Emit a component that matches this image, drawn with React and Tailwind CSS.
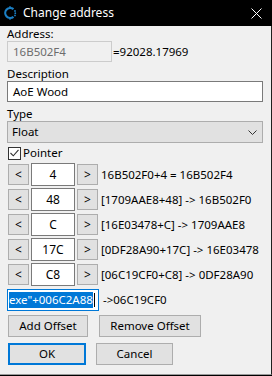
import React from "react";

const font = { fontFamily: '"Noto Sans", "Open Sans", Arial, sans-serif' };

const rows = [
  { off: "4", text: "16B502F0+4 = 16B502F4" },
  { off: "48", text: "[1709AAE8+48] -> 16B502F0" },
  { off: "C", text: "[16E03478+C] -> 1709AAE8" },
  { off: "17C", text: "[0DF28A90+17C] -> 16E03478" },
  { off: "C8", text: "[06C19CF0+C8] -> 0DF28A90" },
];

function AppIcon() {
  return (
    <svg width="14" height="14" viewBox="0 0 14 14" className="shrink-0">
      <path
        d="M10.5 3.2 A5 5 0 1 0 10.5 10.8"
        fill="none"
        stroke="#1b7fc4"
        strokeWidth="2.2"
      />
      <circle cx="12" cy="5" r="0.9" fill="#1b7fc4" />
      <circle cx="12.3" cy="7.2" r="0.9" fill="#1b7fc4" />
      <circle cx="12" cy="9.4" r="0.9" fill="#1b7fc4" />
      <circle cx="7" cy="0.9" r="0.8" fill="#1b7fc4" />
      <circle cx="7" cy="13.1" r="0.8" fill="#1b7fc4" />
    </svg>
  );
}

function SmallBtn({ children }) {
  return (
    <div className="w-[21px] h-[21px] shrink-0 flex items-center justify-center bg-[#e1e1e1] border border-[#adadad] text-[12px] leading-none text-black">
      {children}
    </div>
  );
}

function OffsetRow({ off, text }) {
  return (
    <div className="flex items-center h-[23px] pl-[1px]">
      <SmallBtn>&lt;</SmallBtn>
      <div className="ml-[2px] w-[44px] h-[23px] bg-white border border-[#7a7a7a] flex items-center justify-center text-[12px]">
        {off}
      </div>
      <div className="ml-[2px]">
        <SmallBtn>&gt;</SmallBtn>
      </div>
      <span className="ml-[3px] text-black whitespace-nowrap">{text}</span>
    </div>
  );
}

export default function App() {
  return (
    <div className="w-[272px] h-[376px] bg-black flex flex-col select-none" style={font}>
      {/* Title bar */}
      <div className="h-[26px] flex items-center shrink-0">
        <div className="ml-[3px]">
          <AppIcon />
        </div>
        <span className="ml-[6px] text-white text-[12px]">Change address</span>
        <svg width="11" height="11" viewBox="0 0 11 11" className="ml-auto mr-[10px]">
          <path d="M0.5 0.5 L10.5 10.5 M10.5 0.5 L0.5 10.5" stroke="#fff" strokeWidth="1" />
        </svg>
      </div>

      {/* Body */}
      <div className="flex-1 bg-[#f0f0f0] border-r border-[#1f1f1f] border-b border-b-[#9a9a9a] mb-[1px] px-[7px] text-[11.5px] text-black">
        <div className="h-[15px] leading-[15px]">Address:</div>
        <div className="flex items-center h-[21px]">
          <div className="w-[105px] h-[21px] bg-[#f0f0f0] border border-[#cccccc] flex items-center pl-[5px] text-[#6d6d6d]">
            16B502F4
          </div>
          <span className="ml-[1px]">=92028.17969</span>
        </div>

        <div className="mt-[4px] h-[15px] leading-[15px]">Description</div>
        <div className="w-[256px] h-[21px] bg-white border border-[#7a7a7a] flex items-center pl-[5px]">
          AoE Wood
        </div>

        <div className="mt-[4px] h-[15px] leading-[15px]">Type</div>
        <div className="w-[256px] h-[22px] bg-[#e1e1e1] border border-[#adadad] flex items-center pl-[4px] pr-[5px]">
          <span>Float</span>
          <svg width="9" height="5" viewBox="0 0 9 5" className="ml-auto">
            <path d="M0.5 0.5 L4.5 4.5 L8.5 0.5" fill="none" stroke="#333" strokeWidth="1" />
          </svg>
        </div>

        <div className="mt-[3px] h-[14px] flex items-center pl-[1px]">
          <div className="w-[13px] h-[13px] bg-white border border-[#333] flex items-center justify-center">
            <svg width="9" height="8" viewBox="0 0 9 8">
              <path d="M0.5 4 L3.3 6.8 L8.5 0.8" fill="none" stroke="#333" strokeWidth="1.1" />
            </svg>
          </div>
          <span className="ml-[2px]">Pointer</span>
        </div>

        <div className="mt-[3px] flex flex-col gap-[2px]">
          {rows.map((r) => (
            <OffsetRow key={r.off} off={r.off} text={r.text} />
          ))}
        </div>

        <div className="mt-[3px] flex items-center h-[22px]">
          <div className="w-[92px] h-[22px] bg-white border border-[#0078d7] flex items-center overflow-hidden pl-[1px]">
            <span className="bg-[#0078d7] text-white whitespace-nowrap leading-[16px]">
              exe"+006C2A88
            </span>
            <span className="w-[1px] h-[14px] bg-black ml-[1px]" />
          </div>
          <span className="ml-[4px]">-&gt;06C19CF0</span>
        </div>

        <div className="mt-[4px] flex items-center pl-[1px]">
          <div className="w-[80px] h-[22px] bg-[#e1e1e1] border border-[#adadad] flex items-center justify-center">
            Add Offset
          </div>
          <div className="ml-[11px] w-[102px] h-[22px] bg-[#e1e1e1] border border-[#adadad] flex items-center justify-center">
            Remove Offset
          </div>
        </div>

        <div className="mt-[6px] flex items-center pl-[1px]">
          <div className="w-[78px] h-[22px] bg-[#e1e1e1] border-2 border-[#0078d7] flex items-center justify-center">
            OK
          </div>
          <div className="ml-[10px] w-[77px] h-[22px] bg-[#e1e1e1] border border-[#adadad] flex items-center justify-center">
            Cancel
          </div>
        </div>
      </div>
    </div>
  );
}
